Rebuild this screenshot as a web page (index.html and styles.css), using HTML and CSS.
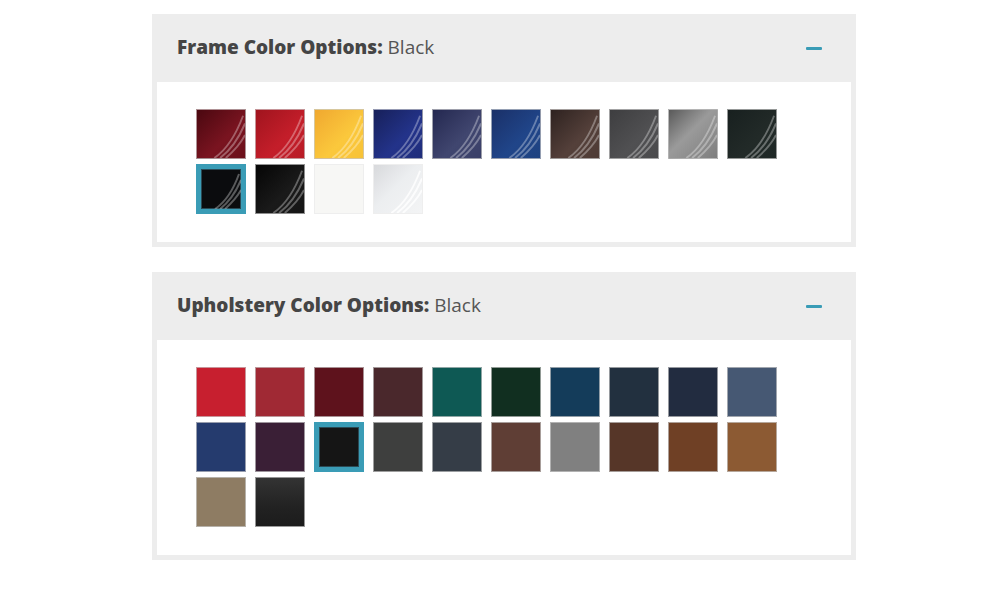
FILE: index.html
```html
<!DOCTYPE html>
<html lang="en">
<head>
<meta charset="utf-8">
<title>Color Options</title>
<link rel="stylesheet" href="styles.css">
</head>
<body>
<div class="wrap">
  <section class="panel">
    <div class="panel-head">
      <h2 class="title"><strong>Frame Color Options:</strong> Black</h2>
      <span class="minus"></span>
    </div>
    <div class="panel-body">
      <div class="swatches">
        <div class="sw gloss" style="background:linear-gradient(135deg,#4a0810,#7a1420 60%,#6a0f1a)"><svg viewBox="0 0 50 50"><path d="M18 50 Q36 38 48 6"/><path d="M24 50 Q40 38 50 14"/><path d="M30 50 Q44 38 50 26"/></svg></div>
        <div class="sw gloss" style="background:linear-gradient(135deg,#a0141e,#c41e2a 60%,#b81b26)"><svg viewBox="0 0 50 50"><path d="M18 50 Q36 38 48 6"/><path d="M24 50 Q40 38 50 14"/><path d="M30 50 Q44 38 50 26"/></svg></div>
        <div class="sw gloss" style="background:linear-gradient(135deg,#f0a830,#fbc83c 60%,#f7c236)"><svg viewBox="0 0 50 50"><path d="M18 50 Q36 38 48 6"/><path d="M24 50 Q40 38 50 14"/><path d="M30 50 Q44 38 50 26"/></svg></div>
        <div class="sw gloss" style="background:linear-gradient(135deg,#17205a,#23338a 60%,#1f2d7a)"><svg viewBox="0 0 50 50"><path d="M18 50 Q36 38 48 6"/><path d="M24 50 Q40 38 50 14"/><path d="M30 50 Q44 38 50 26"/></svg></div>
        <div class="sw gloss" style="background:linear-gradient(135deg,#242850,#40466f 60%,#3a3f68)"><svg viewBox="0 0 50 50"><path d="M18 50 Q36 38 48 6"/><path d="M24 50 Q40 38 50 14"/><path d="M30 50 Q44 38 50 26"/></svg></div>
        <div class="sw gloss" style="background:linear-gradient(135deg,#1a3068,#204589 60%,#1e4280)"><svg viewBox="0 0 50 50"><path d="M18 50 Q36 38 48 6"/><path d="M24 50 Q40 38 50 14"/><path d="M30 50 Q44 38 50 26"/></svg></div>
        <div class="sw gloss" style="background:linear-gradient(135deg,#2e2220,#54403a 60%,#4e3b35)"><svg viewBox="0 0 50 50"><path d="M18 50 Q36 38 48 6"/><path d="M24 50 Q40 38 50 14"/><path d="M30 50 Q44 38 50 26"/></svg></div>
        <div class="sw gloss" style="background:linear-gradient(135deg,#3e3e40,#505052 60%,#4a4a4c)"><svg viewBox="0 0 50 50"><path d="M18 50 Q36 38 48 6"/><path d="M24 50 Q40 38 50 14"/><path d="M30 50 Q44 38 50 26"/></svg></div>
        <div class="sw gloss" style="background:linear-gradient(135deg,#5a5a5a,#9a9a9a 45%,#7e7e7e)"><svg viewBox="0 0 50 50"><path d="M18 50 Q36 38 48 6"/><path d="M24 50 Q40 38 50 14"/><path d="M30 50 Q44 38 50 26"/></svg></div>
        <div class="sw gloss" style="background:linear-gradient(135deg,#18201f,#222a28 60%,#1f2826)"><svg viewBox="0 0 50 50"><path d="M18 50 Q36 38 48 6"/><path d="M24 50 Q40 38 50 14"/><path d="M30 50 Q44 38 50 26"/></svg></div>
        <div class="sw gloss selected" style="background:#0b0c0e"><svg viewBox="0 0 40 40"><path d="M14 40 Q29 30 38 5"/><path d="M19 40 Q32 30 40 11"/><path d="M24 40 Q35 30 40 21"/></svg></div>
        <div class="sw gloss" style="background:linear-gradient(135deg,#050505,#1a1a1a 60%,#141414)"><svg viewBox="0 0 50 50"><path d="M18 50 Q36 38 48 6"/><path d="M24 50 Q40 38 50 14"/><path d="M30 50 Q44 38 50 26"/></svg></div>
        <div class="sw light" style="background:#f7f7f5"></div>
        <div class="sw gloss light" style="background:linear-gradient(135deg,#d8d9dc,#eceef0 45%,#f3f4f5)"><svg viewBox="0 0 50 50" class="faint"><path d="M18 50 Q36 38 48 6"/><path d="M24 50 Q40 38 50 14"/><path d="M30 50 Q44 38 50 26"/></svg></div>
      </div>
    </div>
  </section>

  <section class="panel">
    <div class="panel-head">
      <h2 class="title"><strong>Upholstery Color Options:</strong> Black</h2>
      <span class="minus"></span>
    </div>
    <div class="panel-body">
      <div class="swatches">
        <div class="sw" style="background:#c71f2f"></div>
        <div class="sw" style="background:#a02934"></div>
        <div class="sw" style="background:#5e121c"></div>
        <div class="sw" style="background:#4a282c"></div>
        <div class="sw" style="background:#0e5954"></div>
        <div class="sw" style="background:#112f20"></div>
        <div class="sw" style="background:#143c5a"></div>
        <div class="sw" style="background:#22303f"></div>
        <div class="sw" style="background:#222c40"></div>
        <div class="sw" style="background:#465873"></div>
        <div class="sw" style="background:#253b6e"></div>
        <div class="sw" style="background:#3a1f36"></div>
        <div class="sw selected" style="background:#151515"></div>
        <div class="sw" style="background:#3e3f3e"></div>
        <div class="sw" style="background:#353d47"></div>
        <div class="sw" style="background:#5f3e35"></div>
        <div class="sw" style="background:#808080"></div>
        <div class="sw" style="background:#563628"></div>
        <div class="sw" style="background:#6f4025"></div>
        <div class="sw" style="background:#8c5a33"></div>
        <div class="sw" style="background:#8e7c63"></div>
        <div class="sw" style="background:linear-gradient(180deg,#333,#222 60%,#1c1c1c)"></div>
      </div>
    </div>
  </section>
</div>
</body>
</html>
```
FILE: styles.css
```css
* { box-sizing: border-box; }
html, body { margin: 0; padding: 0; background: #fff; }
body { font-family: "Open Sans", "Lato", sans-serif; color: #4a4a4a; }

.wrap {
  width: 704px;
  margin: 14px 0 0 152px;
  display: flex;
  flex-direction: column;
  gap: 25px;
}

.panel {
  background: #ededed;
  padding: 0 5px 5px;
}

.panel-head {
  height: 68px;
  display: flex;
  align-items: center;
  justify-content: space-between;
  padding: 0 29px 2px 20px;
}

.title {
  margin: 0;
  font-size: 19px;
  line-height: 24px;
  font-weight: 400;
  color: #555;
}
.title strong { font-weight: 800; color: #454545; }

.minus {
  width: 16px;
  height: 3px;
  background: #3a9cb6;
  border-radius: 1px;
  margin-top: 2px;
}

.panel-body {
  background: #fff;
  padding: 27px 0 28px 39px;
}

.swatches {
  display: grid;
  grid-template-columns: repeat(10, 50px);
  column-gap: 9px;
  row-gap: 5px;
}

.sw {
  width: 50px;
  height: 50px;
  border: 1px solid rgba(200, 200, 200, 0.7);
  overflow: hidden;
}
.sw svg { display: block; width: 100%; height: 100%; }
.sw svg path { fill: none; stroke: rgba(255,255,255,0.32); stroke-width: 2; }
.sw svg.faint path { stroke: rgba(255,255,255,0.8); }
.sw.light { border-color: #eeeeee; }

.sw.selected {
  border: 5px solid #3a9cb6;
  box-shadow: inset 0 0 0 1px #2a4a55;
}
```
